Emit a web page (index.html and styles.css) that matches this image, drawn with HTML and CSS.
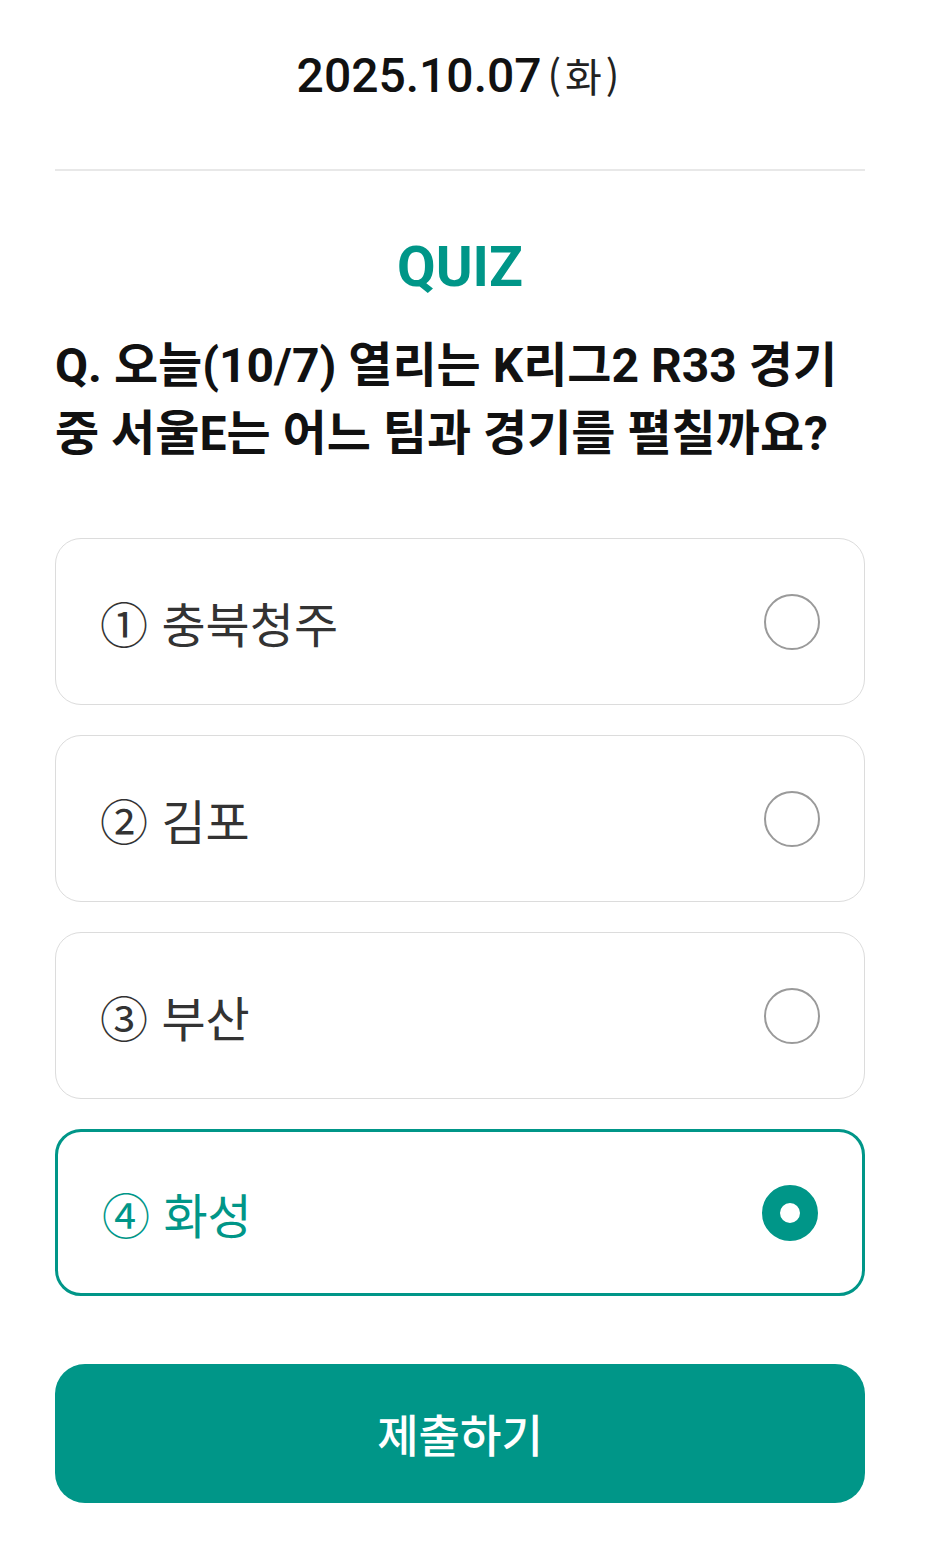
FILE: index.html
```html
<!DOCTYPE html>
<html lang="ko">
<head>
    <meta charset="UTF-8">
    <meta name="viewport" content="width=device-width, initial-scale=1.0">
    <title>Quiz</title>

    <link rel="stylesheet" href="styles.css">
</head>
<body>
    <div class="page">
        <div class="date-row">
            <span class="date">2025.10.07</span><span class="weekday">(화)</span>
        </div>
        <div class="divider"></div>

        <h1 class="quiz-title">QUIZ</h1>
        <p class="question">Q. 오늘(10/7) 열리는 K리그2 R33 경기 중 서울E는 어느 팀과 경기를 펼칠까요?</p>

        <div class="options">
            <label class="option">
                <span class="option-text">① 충북청주</span>
                <input type="radio" name="answer" value="1">
            </label>
            <label class="option">
                <span class="option-text">② 김포</span>
                <input type="radio" name="answer" value="2">
            </label>
            <label class="option">
                <span class="option-text">③ 부산</span>
                <input type="radio" name="answer" value="3">
            </label>
            <label class="option selected">
                <span class="option-text">④ 화성</span>
                <input type="radio" name="answer" value="4" checked>
            </label>
        </div>

        <button class="submit-btn" type="button">제출하기</button>
    </div>
</body>
</html>
```

FILE: styles.css
```css
body {
    margin: 0;
    background: #fff;
    font-family: Roboto, "Noto Sans CJK KR", sans-serif;
    color: #111;
}

.page {
    padding: 0 66px 40px 55px;
}

.date-row {
    height: 150px;
    display: flex;
    align-items: center;
    justify-content: center;
    gap: 6px;
}

.date {
    font-size: 48px;
    font-weight: 500;
    color: #111;
}

.weekday {
    font-family: "Noto Sans CJK KR", sans-serif;
    font-size: 40px;
    font-weight: 400;
    letter-spacing: 4px;
    color: #222;
}

.divider {
    height: 2px;
    margin-top: 19px;
    background-color: #e8e8e8;
}

.quiz-title {
    margin: 63px 0 0;
    font-size: 56px;
    line-height: 67px;
    font-weight: 700;
    text-align: center;
    color: #009688;
}

.question {
    margin: 31px 0 0;
    font-size: 48px;
    line-height: 68px;
    font-weight: 700;
    color: #111;
    word-break: keep-all;
}

.options {
    margin-top: 70px;
    display: flex;
    flex-direction: column;
    gap: 30px;
}

.option {
    box-sizing: border-box;
    height: 167px;
    padding: 0 44px;
    display: flex;
    align-items: center;
    justify-content: space-between;
    border: 1.5px solid #dcdcdc;
    border-radius: 26px;
    background: #fff;
}

.option-text {
    font-family: "Noto Sans CJK KR", sans-serif;
    font-size: 48px;
    font-weight: 400;
    color: #333;
}

.option input[type='radio'] {
    -webkit-appearance: none;
    appearance: none;
    margin: 0;
    width: 56px;
    height: 56px;
    border: 2px solid #9a9a9a;
    border-radius: 50%;
    box-sizing: border-box;
    background: #fff;
}

.option.selected {
    border: 3px solid #009688;
}

.option.selected .option-text {
    color: #009688;
}

.option input[type='radio']:checked {
    border: 18px solid #009688;
    background: #fff;
}

.submit-btn {
    display: block;
    width: 100%;
    height: 139px;
    margin-top: 68px;
    border: none;
    border-radius: 30px;
    background-color: #009688;
    color: #fff;
    font-family: "Noto Sans CJK KR", sans-serif;
    font-size: 45px;
    font-weight: 500;
}
```
